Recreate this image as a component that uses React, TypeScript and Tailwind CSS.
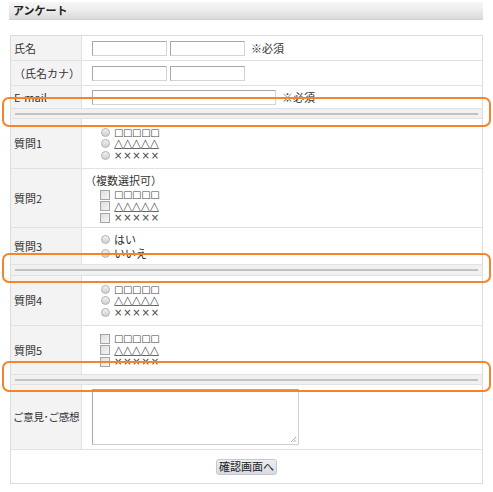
import React from "react";

const font = { fontFamily: '"Noto Sans CJK JP", "Noto Sans", sans-serif' };

const Radio = () => (
  <span className="inline-block shrink-0 w-[9px] h-[9px] rounded-full border border-[#b5b5b5] bg-gradient-to-b from-[#f2f2f2] to-[#cfcfcf] mr-[4px]" />
);

const Check = () => (
  <span className="inline-block shrink-0 w-[10px] h-[10px] border border-[#a5a5a5] bg-gradient-to-br from-[#dedede] to-[#f6f6f6] mr-[4px]" />
);

const marks = [
  { t: "\u25A1\u25A1\u25A1\u25A1\u25A1", cls: "text-[10px] tracking-[-0.4px]" },
  { t: "\u25B3\u25B3\u25B3\u25B3\u25B3", cls: "text-[12px] tracking-[-0.3px]" },
  { t: "\u00D7\u00D7\u00D7\u00D7\u00D7", cls: "text-[10px] tracking-[0.8px]" },
];

const Options = ({ type }: { type: "radio" | "check" }) => (
  <div className="ml-[9px]">
    {marks.map((m) => (
      <div key={m.t} className="flex items-center h-[11.5px] whitespace-nowrap">
        {type === "radio" ? <Radio /> : <Check />}
        <span
          className={`${m.cls} leading-[11px] text-[#444]`}
          style={{ fontFamily: '"DejaVu Sans", sans-serif' }}
        >
          {m.t}
        </span>
      </div>
    ))}
  </div>
);

const Sep = ({ h }: { h: string }) => (
  <tr className={h}>
    <td colSpan={2} className="bg-[#f1f1f1] border-y border-[#e2e2e2] px-[4px]">
      <div className="border-t-2 border-[#c2c2c2]" />
    </td>
  </tr>
);

const Label = ({ children }: { children: React.ReactNode }) => (
  <td className="bg-[#f3f3f3] border-r border-[#e2e2e2] pl-[3px] text-[11px] text-[#333] align-middle whitespace-nowrap overflow-visible">
    {children}
  </td>
);

const Input = ({ w }: { w: string }) => (
  <span className={`inline-block ${w} h-[15px] border border-[#a8a8a8] border-r-[#d4d4d4] border-b-[#d4d4d4] bg-white`} />
);

export default function App() {
  return (
    <div className="relative w-[493px] h-[492px] bg-white" style={font}>
      <div className="pt-[2px] pl-[9px]">
        <div className="w-[474px] h-[18px] bg-gradient-to-b from-[#f7f7f7] via-[#ececec] to-[#dadada] border-b border-[#d0d0d0] pl-[4px] flex items-center">
          <span className="text-[11px] font-bold text-[#222]">アンケート</span>
        </div>
      </div>

      <table className="ml-[10px] mt-[15px] w-[473px] table-fixed border-collapse border border-[#dcdcdc] text-[11px] text-[#333]">
        <colgroup>
          <col className="w-[71px]" />
          <col />
        </colgroup>
        <tbody>
          <tr className="h-[25px] border-b border-[#e2e2e2]">
            <Label>氏名</Label>
            <td className="pl-[10px] align-middle">
              <div className="flex items-center gap-[3px]">
                <Input w="w-[75px]" />
                <Input w="w-[75px]" />
                <span className="ml-[3px]">※必須</span>
              </div>
            </td>
          </tr>
          <tr className="h-[25px] border-b border-[#e2e2e2]">
            <Label>（氏名カナ）</Label>
            <td className="pl-[10px] align-middle">
              <div className="flex items-center gap-[3px]">
                <Input w="w-[75px]" />
                <Input w="w-[75px]" />
              </div>
            </td>
          </tr>
          <tr className="h-[23px]">
            <Label>E-mail</Label>
            <td className="pl-[10px] align-middle">
              <div className="flex items-center gap-[6px]">
                <Input w="w-[184px]" />
                <span>※必須</span>
              </div>
            </td>
          </tr>
          <Sep h="h-[10px]" />
          <tr className="h-[50px] border-b border-[#e2e2e2]">
            <Label>質問1</Label>
            <td className="align-middle">
              <div className="ml-[10px]">
                <Options type="radio" />
              </div>
            </td>
          </tr>
          <tr className="h-[59px] border-b border-[#e2e2e2]">
            <Label>質問2</Label>
            <td className="align-middle">
              <div className="ml-[3px] leading-[14px] mb-[2px]">（複数選択可）</div>
              <div className="ml-[9px]">
                <Options type="check" />
              </div>
            </td>
          </tr>
          <tr className="h-[37px]">
            <Label>質問3</Label>
            <td className="align-middle">
              <div className="ml-[19px]">
                {["はい", "いいえ"].map((t) => (
                  <div key={t} className="flex items-center h-[14px] whitespace-nowrap">
                    <Radio />
                    <span className="text-[11px] leading-[12px]">{t}</span>
                  </div>
                ))}
              </div>
            </td>
          </tr>
          <Sep h="h-[11px]" />
          <tr className="h-[50px] border-b border-[#e2e2e2]">
            <Label>質問4</Label>
            <td className="align-middle">
              <div className="ml-[10px]">
                <Options type="radio" />
              </div>
            </td>
          </tr>
          <tr className="h-[49px]">
            <Label>質問5</Label>
            <td className="align-middle">
              <div className="ml-[9px]">
                <Options type="check" />
              </div>
            </td>
          </tr>
          <Sep h="h-[10px]" />
          <tr className="h-[65px] border-b border-[#e2e2e2]">
            <td className="bg-[#f3f3f3] border-r border-[#e2e2e2] pl-[2px] text-[10.5px] tracking-[-0.3px] text-[#333] align-middle whitespace-nowrap">
              ご意見･ご感想
            </td>
            <td className="pl-[10px] align-middle">
              <div className="relative w-[207px] h-[56px] border border-[#a8a8a8] border-r-[#cfcfcf] border-b-[#cfcfcf] bg-white">
                <svg className="absolute right-[1px] bottom-[1px]" width="8" height="8" viewBox="0 0 8 8">
                  <path d="M7 2L2 7M7 4.5L4.5 7M7 6.5L6.5 7" stroke="#999" strokeWidth="0.8" />
                </svg>
              </div>
            </td>
          </tr>
          <tr className="h-[34px]">
            <td colSpan={2} className="align-middle text-center">
              <button className="inline-flex items-center justify-center w-[61px] h-[16px] rounded-[3px] border border-[#c4c8d0] bg-gradient-to-b from-[#eceef3] to-[#d8dbe3] text-[11px] text-[#222]">
                確認画面へ
              </button>
            </td>
          </tr>
        </tbody>
      </table>

      <div className="absolute left-[2px] top-[97px] w-[489px] h-[30px] border-2 border-[#f5842a] rounded-[7px] pointer-events-none" />
      <div className="absolute left-[2px] top-[253px] w-[489px] h-[30px] border-2 border-[#f5842a] rounded-[7px] pointer-events-none" />
      <div className="absolute left-[2px] top-[361px] w-[489px] h-[31px] border-2 border-[#f5842a] rounded-[7px] pointer-events-none" />
    </div>
  );
}
